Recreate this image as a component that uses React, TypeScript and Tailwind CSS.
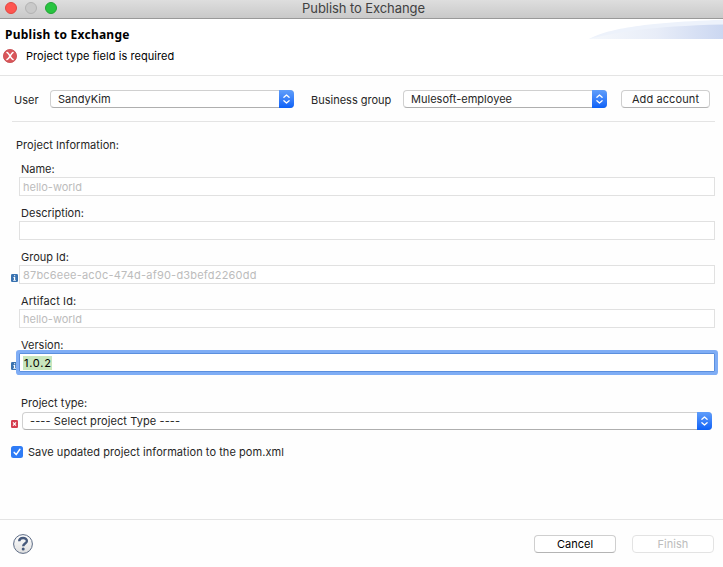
import React from "react";

function Chevrons() {
  return (
    <span className="flex h-full w-[15px] shrink-0 items-center justify-center rounded-r-[4px] bg-gradient-to-b from-[#609efa] to-[#0a60f7]">
      <svg width="9" height="12" viewBox="0 0 9 12" fill="none" stroke="#fff" strokeWidth="1.3" strokeLinecap="round" strokeLinejoin="round">
        <path d="M1.9 4.2 4.5 1.9l2.6 2.3M1.9 7.8l2.6 2.3 2.6-2.3" />
      </svg>
    </span>
  );
}

function Select({ text, className }: { text: string; className: string }) {
  return (
    <div className={`relative flex h-[18px] items-center rounded-[4px] border border-[#d0d0d0] border-b-[#afafaf] bg-white pl-[7px] ${className}`}>
      <span className="flex-1">{text}</span>
      <span className="absolute -top-px -right-px h-[18px]">
        <Chevrons />
      </span>
    </div>
  );
}

function InfoBadge() {
  return (
    <svg className="absolute top-[24px] left-[-8px]" width="7" height="8" viewBox="0 0 7 8">
      <rect width="7" height="8" rx="1.2" fill="#3972b0" />
      <path d="M3 1.2h1.2v1H3zM2.3 3h1.9v3h.7v.8H2.2V6h.7V3.8h-.6z" fill="#fff" />
    </svg>
  );
}

function Field({ label, labelClass, value, valueClass, info, focused }: {
  label: string;
  labelClass: string;
  value?: string;
  valueClass?: string;
  info?: boolean;
  focused?: boolean;
}) {
  return (
    <div className="relative">
      {info && <InfoBadge />}
      <div className={`h-[15px] pl-[2px] leading-[15px] ${labelClass}`}>{label}</div>
      <div
        className={
          focused
            ? "relative flex h-[19px] items-center rounded-[1px] border border-[#5b8fde] bg-white pl-[3px] shadow-[0_0_0_3px_#7fadf5]"
            : "flex h-[19px] items-center border border-[#e1e1e1] bg-white pl-[3px] text-[#bcbcbc]"
        }
      >
        {value && <span className={valueClass}>{value}</span>}
      </div>
    </div>
  );
}

export default function App() {
  return (
    <div className="flex h-[567px] w-[723px] flex-col overflow-hidden bg-[#fefefe] font-['Inter',sans-serif] text-[11px] leading-[14px] whitespace-nowrap text-[#262626]">
      <div className="relative flex h-[19px] items-center justify-center border-b border-[#999] bg-gradient-to-b from-[#dedede] to-[#c9c9c9]">
        <div className="absolute top-[2px] left-[5px] flex gap-2">
          <span className="size-3 rounded-full border border-[#e2463f] bg-[#fe5650]" />
          <span className="size-3 rounded-full border border-[#b3b3b3] bg-[#c9c9c9]" />
          <span className="size-3 rounded-full border border-[#20a434] bg-[#28c440]" />
        </div>
        <span className="relative top-[-1px] left-[2px] text-[13px] tracking-[-0.08px] text-[#414141]">Publish to Exchange</span>
      </div>

      <div className="relative h-[57px] border-b border-[#e4e4e4] bg-white">
        <svg className="absolute top-0 right-0" width="134" height="20" viewBox="0 0 134 20">
          <defs>
            <linearGradient id="wave">
              <stop offset="0" stopColor="#f5f8fc" />
              <stop offset="0.5" stopColor="#e8edf8" />
              <stop offset="1" stopColor="#cbd7f1" />
            </linearGradient>
          </defs>
          <path d="M0 20C15 12 43 4 134 .8V20z" fill="#edf2fb" />
          <path d="M0 20C24 14 60 7 134 5.5V20z" fill="url(#wave)" />
        </svg>
        <div className="pt-[8px] pl-[5px] font-['Noto_Sans',sans-serif] text-[12px] leading-4 font-bold tracking-[0.25px] text-black">Publish to Exchange</div>
        <div className="flex items-center gap-[9px] pt-[6px] pl-[3px]">
          <svg width="14" height="14" viewBox="0 0 14 14">
            <circle cx="7" cy="7" r="6.6" fill="#d9565a" stroke="#c5474b" strokeWidth=".8" />
            <path d="M4 3.5c2 .2 3.8 6.5 6 7M10 3.5C8.2 4 6.3 10 4 10.5" fill="none" stroke="#fff" strokeWidth="1.5" strokeLinecap="round" />
          </svg>
          <span className="tracking-[0.06px] text-black">Project type field is required</span>
        </div>
      </div>

      <div className="ml-[12px] flex h-[46px] w-[703px] items-center border-b border-[#e4e4e4]">
        <span className="w-[38px] pt-[2px] pl-[2px]">User</span>
        <Select text="SandyKim" className="w-[244px]" />
        <span className="ml-[17px] w-[92px] pt-[2px]">Business group</span>
        <Select text="Mulesoft-employee" className="w-[204px] tracking-[0.02px]" />
        <button className="ml-[14px] h-[18px] w-[89px] rounded-[4px] border border-[#cfcfcf] border-b-[#b4b4b4] bg-white tracking-[0.1px]">Add account</button>
      </div>

      <div className="h-[40px] pt-[16px] pl-[16px] tracking-[0.05px]">Project Information:</div>

      <div className="ml-[19px] flex w-[696px] flex-col gap-[10px]">
        <Field label="Name:" labelClass="tracking-[0px]" value="hello-world" valueClass="tracking-[0px]" />
        <Field label="Description:" labelClass="tracking-[0.02px]" />
        <Field label="Group Id:" labelClass="tracking-[0px]" value="87bc6eee-ac0c-474d-af90-d3befd2260dd" valueClass="tracking-[0.2px]" info />
        <Field label="Artifact Id:" labelClass="tracking-[0.1px]" value="hello-world" valueClass="tracking-[0px]" />
        <Field label="Version:" labelClass="tracking-[0px]" value="1.0.2" valueClass="bg-[#c8e6bd] pl-px text-black tracking-[0.75px]" info focused />
      </div>

      <div className="mt-[24px] ml-[21px] h-[16px] tracking-[0.02px]">Project type:</div>
      <div className="ml-[11px] flex h-[18px] items-center">
        <svg className="mt-[6px] mr-[4px]" width="7" height="8" viewBox="0 0 7 8">
          <rect width="7" height="8" rx="1.2" fill="#d53d4e" />
          <path d="m2 2.3 3 3.4M5 2.3 2 5.7" stroke="#fff" strokeWidth="1.2" />
        </svg>
        <Select text="---- Select project Type ----" className="w-[690px] tracking-[0.1px]" />
      </div>

      <div className="mt-[15px] ml-[11px] flex items-center gap-[5px]">
        <span className="flex size-[12px] items-center justify-center rounded-[2.5px] bg-[#2f7cf6]">
          <svg width="10" height="10" viewBox="0 0 10 10" fill="none" stroke="#fff" strokeWidth="1.5" strokeLinecap="round" strokeLinejoin="round">
            <path d="M2.2 5.4 4.2 7.6 7.9 2.3" />
          </svg>
        </span>
        <span className="tracking-[0.06px]">Save updated project information to the pom.xml</span>
      </div>

      <div className="mt-auto flex h-[48px] items-start border-t border-[#e4e4e4] pt-[14px] pl-[13px]">
        <svg width="20" height="20" viewBox="0 0 20 20">
          <defs>
            <linearGradient id="help" x1="0" y1="0" x2="0" y2="1">
              <stop offset="0" stopColor="#fff" />
              <stop offset="1" stopColor="#dfdfdf" />
            </linearGradient>
          </defs>
          <circle cx="10" cy="10" r="9.4" fill="url(#help)" stroke="#5b6a84" />
          <path d="M6.2 7.2C6.3 3.1 13.9 3 13.9 7c0 2.5-3.7 2.6-3.7 5.2" fill="none" stroke="#475a7c" strokeWidth="2.4" />
          <circle cx="10.2" cy="15.1" r="1.5" fill="#475a7c" />
        </svg>
        <button className="mt-px ml-[501px] h-[18px] w-[82px] rounded-[4px] border border-[#cfcfcf] border-b-[#b4b4b4] bg-white tracking-[0.02px] text-black">Cancel</button>
        <button className="mt-px ml-[16px] h-[18px] w-[82px] rounded-[4px] border border-[#e3e3e3] bg-white tracking-[0.02px] text-[#bcbcbc]">Finish</button>
      </div>
    </div>
  );
}
